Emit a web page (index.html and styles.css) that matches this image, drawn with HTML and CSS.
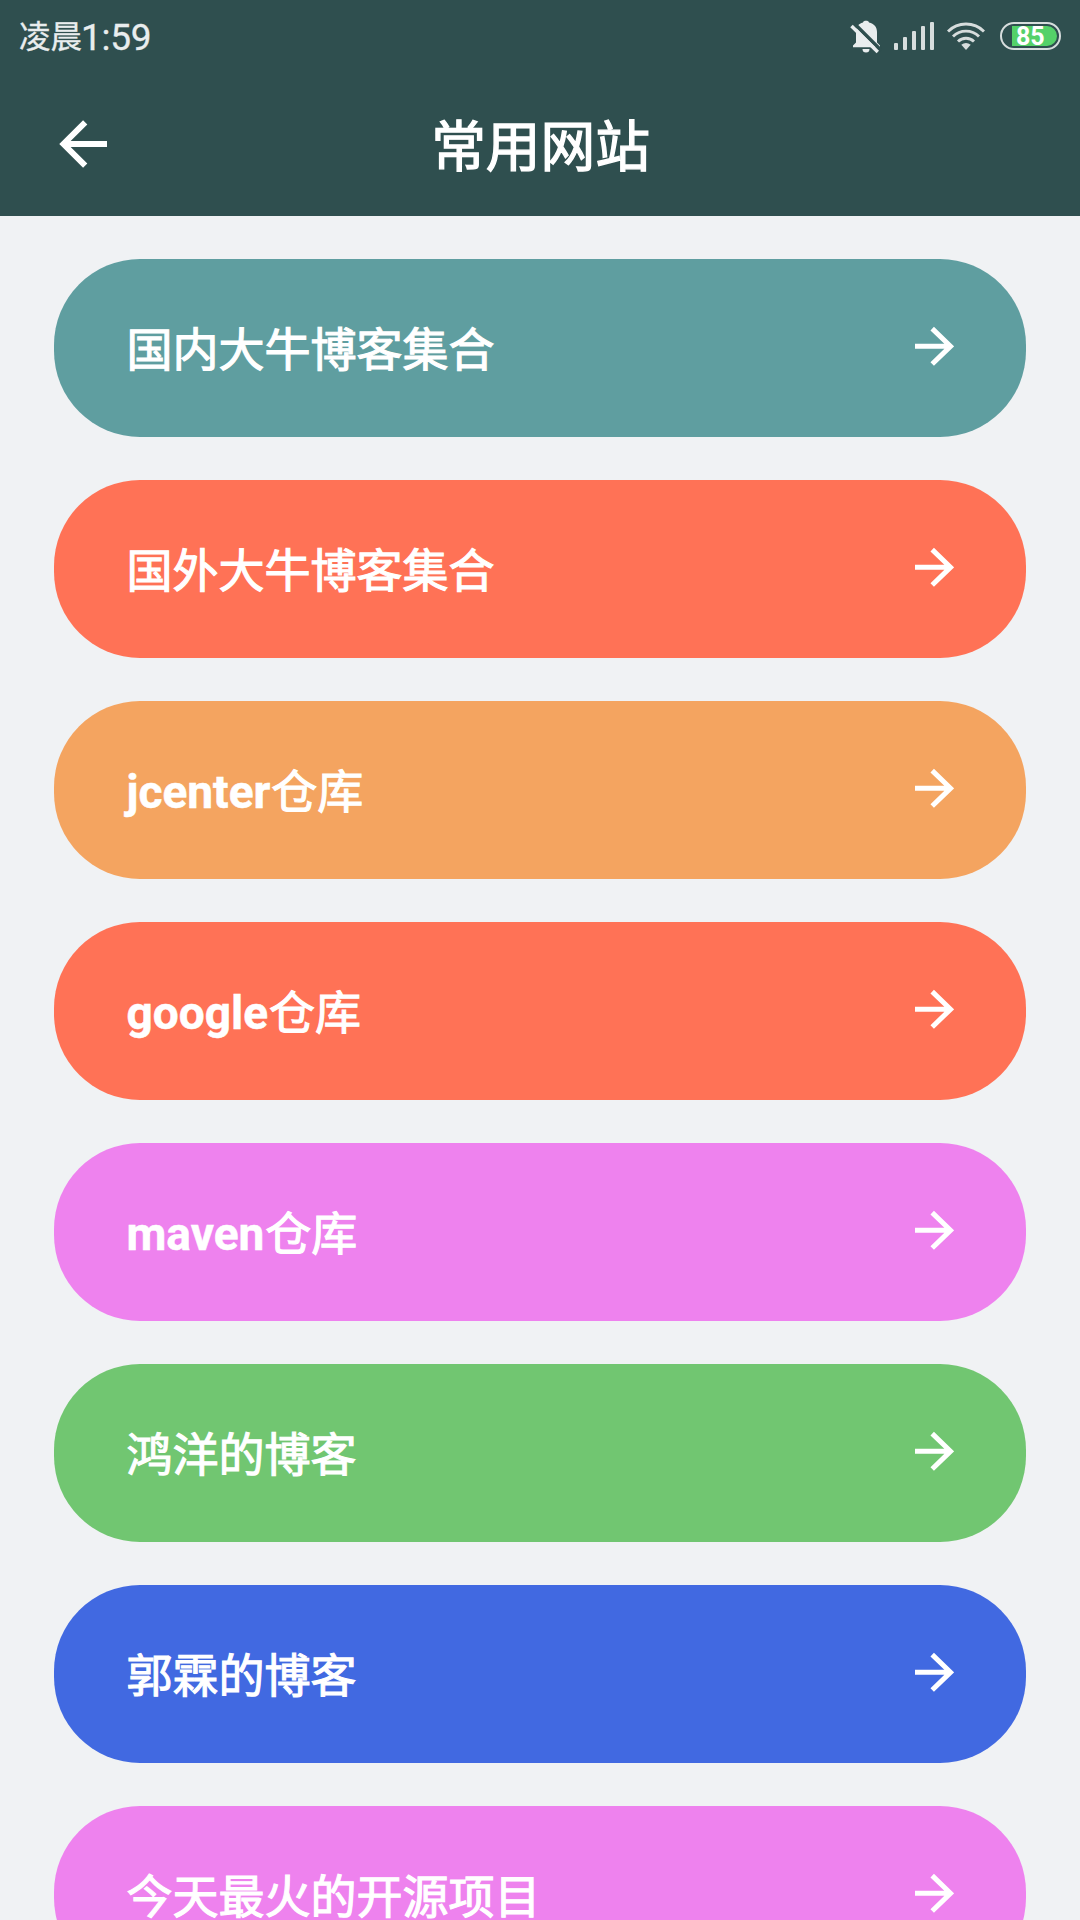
FILE: index.html
```html
<!DOCTYPE html>
<html lang="zh-CN">
<head>
<meta charset="utf-8">
<title>常用网站</title>
<link rel="stylesheet" href="styles.css">
</head>
<body>
<svg width="0" height="0" class="defs">
  <symbol id="next" viewBox="0 0 40 40"><path d="M1 20.3H36M18.2 2.6L36.500 20.3L18.2 38" fill="none" stroke="#fff" stroke-width="5"/></symbol>
</svg>
<div class="screen">
  <header class="top">
    <div class="status">
      <div class="time"><span class="period">凌晨</span><span class="clock">1:59</span></div>
      <div class="indicators">
        <svg class="bell" width="32" height="34" viewBox="0 0 32 34"><path d="M3 27.3V25.5L6 22.5V12C6.400 6.500 8.500 3.500 13 2.500C13 .300 19 .300 19 2.500C24 3.500 27 7 27 12V22.500L30 25.500V27.300Z" fill="#e9edee"/><path d="M12.500 29H19.500A3.500 3.500 0 0 1 12.500 29Z" fill="#e9edee"/><path d="M4.500 3.800L31 30.300" stroke="#2f4f4f" stroke-width="3.500"/><path d="M1.500 6L27.800 32" stroke="#e9edee" stroke-width="3.500"/></svg>
        <svg class="signal" width="40" height="28" viewBox="0 0 40 28" fill="#d7dddd"><rect x="0" y="21" width="4" height="7" rx="1"/><rect x="9" y="15" width="4" height="13" rx="1"/><rect x="18" y="9" width="4" height="19" rx="1"/><rect x="27" y="4" width="4" height="24" rx="1"/><rect x="36" y="0" width="4" height="28" rx="1"/></svg>
        <svg class="wifi" width="38" height="28" viewBox="0 0 38 28"><g fill="none" stroke="#d7dddd" stroke-width="2.900"><path d="M1 9.500A25.500 25.500 0 0 1 37 9.500"/><path d="M6 14.500A18.500 18.500 0 0 1 32 14.500"/><path d="M11 19.500A11.500 11.500 0 0 1 27 19.500"/></g><path d="M14.300 22.800Q19 19.200 23.700 22.800L19 28Z" fill="#d7dddd"/></svg>
        <div class="battery"><div class="charge">85</div></div>
      </div>
    </div>
    <div class="bar">
      <svg class="back" width="50" height="50" viewBox="0 0 50 50"><path d="M49 25H6M27.200 3.300L5.500 25L27.200 46.700" fill="none" stroke="#fff" stroke-width="6"/></svg>
      <h1>常用网站</h1>
      <span></span>
    </div>
  </header>
  <main class="list">
    <a class="item teal"><span class="label">国内大牛博客集合</span><svg><use href="#next"/></svg></a>
    <a class="item coral"><span class="label">国外大牛博客集合</span><svg><use href="#next"/></svg></a>
    <a class="item sand"><span class="label"><b>jcenter</b>仓库</span><svg><use href="#next"/></svg></a>
    <a class="item coral"><span class="label"><b>google</b>仓库</span><svg><use href="#next"/></svg></a>
    <a class="item violet"><span class="label"><b>maven</b>仓库</span><svg><use href="#next"/></svg></a>
    <a class="item green"><span class="label">鸿洋的博客</span><svg><use href="#next"/></svg></a>
    <a class="item blue"><span class="label">郭霖的博客</span><svg><use href="#next"/></svg></a>
    <a class="item violet"><span class="label">今天最火的开源项目</span><svg><use href="#next"/></svg></a>
  </main>
</div>
</body>
</html>
```
FILE: styles.css
```css
* { box-sizing: border-box; }
body { margin: 0; background: #f0f2f4; font-family: Roboto, "Noto Sans CJK SC", sans-serif; }
.defs { display: block; }
.screen { width: 1080px; height: 1920px; overflow: hidden; }
.top { height: 216px; background: #2f4f4f; color: #fff; }
.status { height: 72px; padding: 0 19px 0 19px; display: flex; justify-content: space-between; align-items: center; }
.time { display: flex; align-items: center; color: #e9edee; padding-top: 4px; }
.period { font-size: 31.5px; line-height: 68px; font-weight: 400; -webkit-text-stroke: .3px #e9edee; }
.clock { font-size: 37px; line-height: 68px; letter-spacing: -.3px; margin-left: -1px; -webkit-text-stroke: .3px #e9edee; }
.indicators { display: flex; align-items: center; }
.bell { margin: 2px 12px 0 0; }
.signal { margin-right: 13px; }
.wifi { margin-right: 15px; }
.battery { width: 61px; height: 28px; border: 2px solid #d7dddd; border-radius: 14px; padding: 2px 2px 2px 10px; }
.charge { height: 20px; background: #54d169; border-radius: 0 10px 10px 0; color: #fff; font-size: 25px; font-weight: 700; line-height: 21px; padding-left: 4px; }
.bar { height: 144px; padding: 0 58px; display: grid; grid-template-columns: 50px 1fr 50px; align-items: center; }
h1 { margin: 0; padding: 5px 0 0 1px; text-align: center; font-size: 54.7px; line-height: 80px; font-weight: 400; -webkit-text-stroke: 1.3px #fff; }
.list { padding: 43px 54px 0; display: flex; flex-direction: column; gap: 43px; }
.item { height: 178px; flex: none; border-radius: 86px; padding: 0 72px; display: flex; align-items: center; justify-content: space-between; color: #fff; font-size: 46px; line-height: 68px; }
.label { padding: 3px 0 0 .5px; -webkit-text-stroke: 1.1px #fff; }
.label b { font-weight: 700; margin-right: 1px; -webkit-text-stroke: .5px #fff; }
.item svg { width: 40px; height: 40px; margin-bottom: 4px; }
.teal { background: #5f9ea0; }
.coral { background: #ff7256; }
.sand { background: #f4a460; }
.violet { background: #ee82ee; }
.green { background: #71c671; }
.blue { background: #4169e1; }
```
